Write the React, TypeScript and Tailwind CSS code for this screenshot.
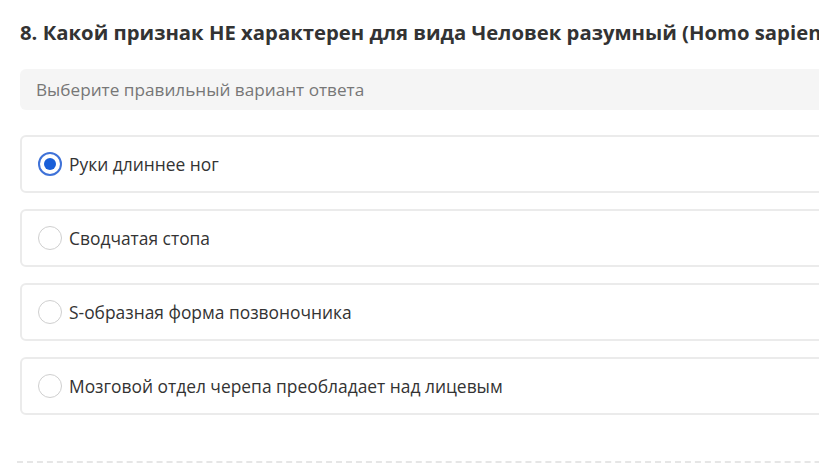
import { useState } from "react";

const OPTIONS = [
  "Руки длиннее ног",
  "Сводчатая стопа",
  "S-образная форма позвоночника",
  "Мозговой отдел черепа преобладает над лицевым",
];

function Radio({ checked }: { checked: boolean }) {
  return (
    <span
      className={
        checked
          ? "flex h-[24px] w-[24px] shrink-0 items-center justify-center rounded-full border-2 border-[#3f72d8] bg-white"
          : "flex h-[24px] w-[24px] shrink-0 items-center justify-center rounded-full border-[1.5px] border-[#cfcfcf] bg-white"
      }
    >
      {checked && <span className="h-[12px] w-[12px] rounded-full bg-[#1a5fd8]" />}
    </span>
  );
}

export default function App() {
  const [selected, setSelected] = useState(0);

  return (
    <div className="h-[476px] w-[819px] overflow-hidden bg-white font-['Open_Sans',sans-serif]">
      <div className="w-[1000px] pl-[20px] pt-[17px]">
        <h2 className="whitespace-nowrap text-[20.3px] font-bold leading-[30px] text-[#333]">
          8. Какой признак НЕ характерен для вида Человек разумный (Homo sapiens)?
        </h2>

        <div className="mt-[22px] flex h-[41px] items-center rounded-[6px] bg-[#f5f5f5] px-[16px] text-[17.2px] text-[#777]">
          Выберите правильный вариант ответа
        </div>

        <div className="mt-[25px] flex flex-col gap-[16px]">
          {OPTIONS.map((text, i) => (
            <button
              key={text}
              onClick={() => setSelected(i)}
              className="flex h-[58px] items-center gap-[7px] rounded-[6px] border-2 border-[#ebebeb] pl-[16px] text-left text-[17.4px] text-[#333]"
            >
              <Radio checked={selected === i} />
              <span>{text}</span>
            </button>
          ))}
        </div>

        <div className="mt-[46px] ml-[-3px] border-t-2 border-dashed border-[#e6e6e6]" />
      </div>
    </div>
  );
}
